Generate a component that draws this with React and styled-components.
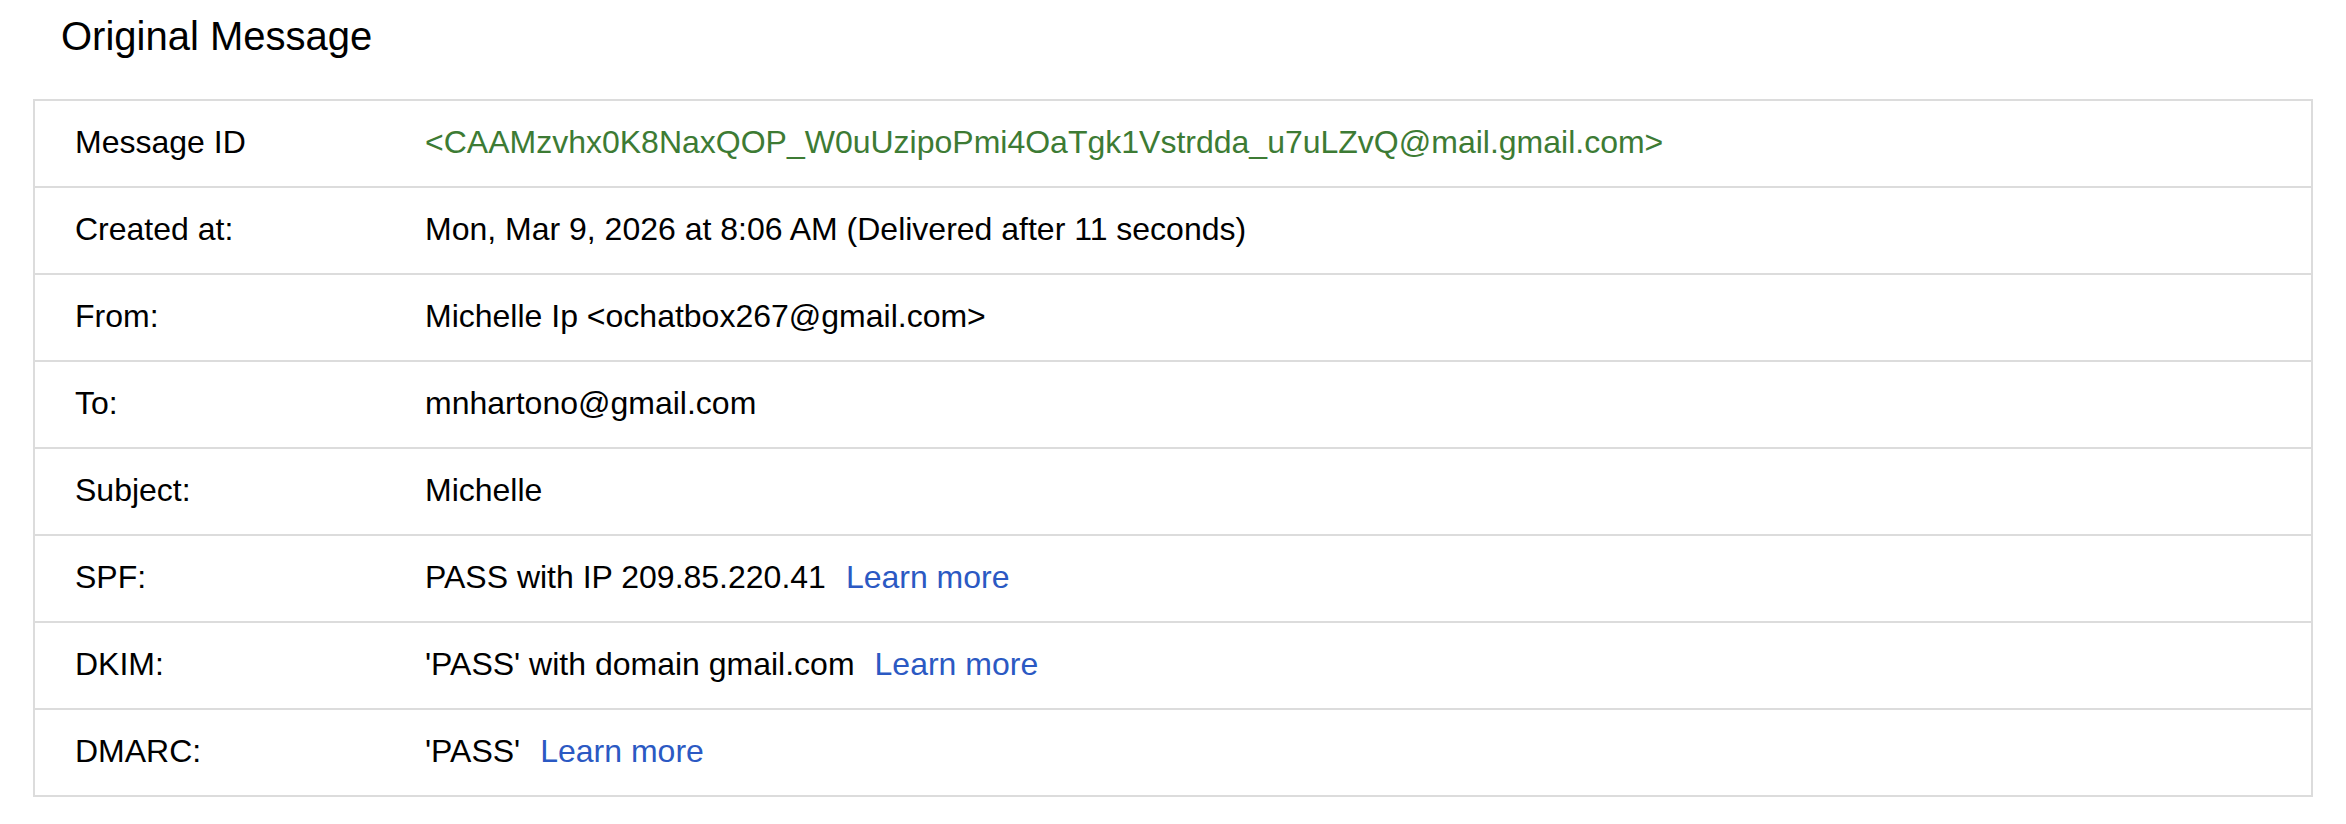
import React from "react";
import styled, { createGlobalStyle } from "styled-components";

const GlobalStyle = createGlobalStyle`
  html, body {
    margin: 0;
    padding: 0;
    background: #ffffff;
  }
  body {
    font-family: "Liberation Sans", Arial, Helvetica, sans-serif;
    color: #000000;
  }
`;

const Page = styled.div`
  padding: 13px 33px 0;
`;

const Title = styled.h1`
  margin: 0 0 40px 28px;
  font-size: 40px;
  line-height: 46px;
  font-weight: 400;
  color: #000000;
`;

const Table = styled.div`
  border: 2px solid #dcdcdc;
  display: flex;
  flex-direction: column;
`;

const Row = styled.div`
  display: grid;
  grid-template-columns: 350px 1fr;
  padding: 23px 40px 25px;
  font-size: 32px;
  line-height: 37px;
  & + & {
    border-top: 2px solid #dcdcdc;
  }
`;

const Label = styled.div`
  color: #000000;
  white-space: nowrap;
`;

const Value = styled.div`
  color: ${(p) => (p.$tone === "green" ? "#3d7b34" : "#000000")};
  white-space: nowrap;
`;

const LearnMore = styled.a`
  color: #2b59c3;
  text-decoration: none;
  margin-left: 20px;
  cursor: pointer;
`;

const rows = [
  {
    label: "Message ID",
    value: "<CAAMzvhx0K8NaxQOP_W0uUzipoPmi4OaTgk1Vstrdda_u7uLZvQ@mail.gmail.com>",
    tone: "green",
  },
  { label: "Created at:", value: "Mon, Mar 9, 2026 at 8:06 AM (Delivered after 11 seconds)" },
  { label: "From:", value: "Michelle Ip <ochatbox267@gmail.com>" },
  { label: "To:", value: "mnhartono@gmail.com" },
  { label: "Subject:", value: "Michelle" },
  { label: "SPF:", value: "PASS with IP 209.85.220.41", link: true },
  { label: "DKIM:", value: "'PASS' with domain gmail.com", link: true },
  { label: "DMARC:", value: "'PASS'", link: true },
];

export default function App() {
  return (
    <>
      <GlobalStyle />
      <Page>
        <Title>Original Message</Title>
        <Table>
          {rows.map((r) => (
            <Row key={r.label}>
              <Label>{r.label}</Label>
              <Value $tone={r.tone}>
                {r.value}
                {r.link && <LearnMore>Learn more</LearnMore>}
              </Value>
            </Row>
          ))}
        </Table>
      </Page>
    </>
  );
}
